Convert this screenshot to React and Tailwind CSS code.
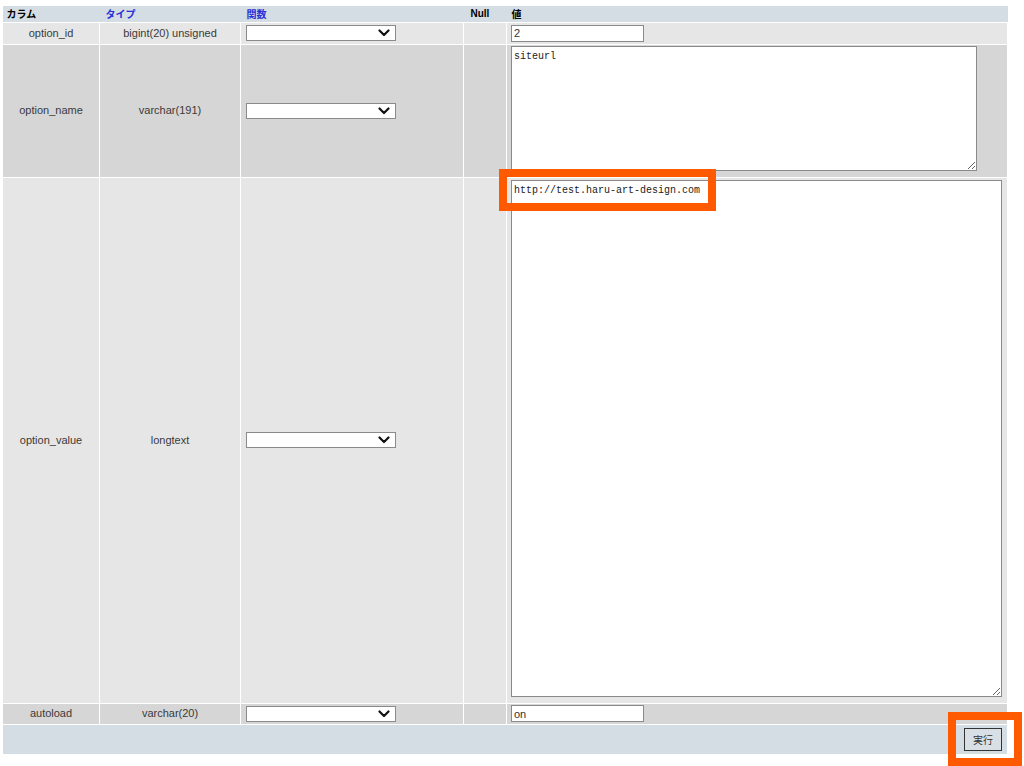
function Chevron() {
  return (
    <svg width="12" height="8" viewBox="0 0 12 8" className="absolute right-[6px] top-[4px]">
      <path d="M1.5 1.5 L6 6 L10.5 1.5" fill="none" stroke="#111" strokeWidth="2.2" strokeLinecap="round" strokeLinejoin="round" />
    </svg>
  );
}

function FuncSelect() {
  return (
    <div className="relative w-[150px] h-[16px]">
      <select className="appearance-none block w-full h-full bg-white border border-[#8a8a8a] text-[11px] outline-none" defaultValue="">
        <option value=""></option>
      </select>
      <Chevron />
    </div>
  );
}

const rows = [
  { name: "option_id", type: "bigint(20) unsigned", h: "h-[22px]", bg: "bg-[#e6e6e6]", kind: "input", value: "2" },
  { name: "option_name", type: "varchar(191)", h: "h-[133px]", bg: "bg-[#d6d6d6]", kind: "textarea", value: "siteurl", w: "w-[466px]", th: "h-[125px]", pt: "pt-[1px]" },
  { name: "option_value", type: "longtext", h: "h-[526px]", bg: "bg-[#e6e6e6]", kind: "textarea", value: "http://test.haru-art-design.com", w: "w-[491px]", th: "h-[517px]", pt: "pt-[2px]" },
  { name: "autoload", type: "varchar(20)", h: "h-[21px]", bg: "bg-[#d6d6d6]", kind: "input", value: "on" },
];

export default function App() {
  return (
    <div className="relative w-[1024px] h-[766px] overflow-hidden bg-white font-['Liberation_Sans','Noto_Sans_CJK_JP',sans-serif] text-[11px] text-[#3a3a3a]">
      <div className="pt-[6px] pl-[2px]">
        <table className="table-fixed border-collapse w-[1005px]">
          <colgroup>
            <col className="w-[97px]" />
            <col className="w-[141px]" />
            <col className="w-[223px]" />
            <col className="w-[43px]" />
            <col className="w-[501px]" />
          </colgroup>
          <thead>
            <tr className="h-[16px] bg-[#d4dde3] text-[10px] font-bold text-left">
              <th className="px-[4px] text-black font-['Noto_Sans_CJK_JP',sans-serif]">カラム</th>
              <th className="px-[6px] text-[#2530d8] font-['Noto_Sans_CJK_JP',sans-serif]">タイプ</th>
              <th className="px-[6px] text-[#2530d8] font-['Noto_Sans_CJK_JP',sans-serif]">関数</th>
              <th className="px-[7px] text-black">Null</th>
              <th className="px-[5px] text-black font-['Noto_Sans_CJK_JP',sans-serif]">値</th>
            </tr>
          </thead>
          <tbody>
            {rows.map((r) => (
              <tr key={r.name} className={`${r.h} ${r.bg}`}>
                <td className="border border-white text-center align-middle">{r.name}</td>
                <td className="border border-white text-center align-middle">{r.type}</td>
                <td className="border border-white px-[5px] align-middle">
                  <FuncSelect />
                </td>
                <td className="border border-white"></td>
                <td className={`border border-white px-[4px] ${r.kind === "textarea" ? `align-top ${r.pt}` : "align-middle"}`}>
                  {r.kind === "input" ? (
                    <input
                      defaultValue={r.value}
                      className="block w-[133px] h-[17px] bg-white border border-[#8a8a8a] px-[2px] text-[11px] text-[#333] outline-none"
                    />
                  ) : (
                    <textarea
                      defaultValue={r.value}
                      className={`block ${r.w} ${r.th} bg-white border border-[#8a8a8a] px-[2px] pt-[3px] font-['Liberation_Mono',monospace] text-[10px] leading-[13px] text-[#222] outline-none resize`}
                    />
                  )}
                </td>
              </tr>
            ))}
            <tr className="h-[30px] bg-[#d4dde3]">
              <td colSpan={5} className="border border-white text-right pr-[5px] align-middle">
                <button className="inline-flex items-center justify-center w-[38px] h-[23px] border border-[#333] bg-[#d9e0e5] text-[10px] text-[#333] font-['Noto_Sans_CJK_JP',sans-serif]">
                  実行
                </button>
              </td>
            </tr>
          </tbody>
        </table>
      </div>

      {/* annotation boxes */}
      <div className="absolute left-[499px] top-[169px] w-[217px] h-[42px] border-[8px] border-[#ff5a00]"></div>
      <div className="absolute left-[948px] top-[712px] w-[74px] h-[54px] border-[8px] border-[#ff5a00]"></div>
    </div>
  );
}
